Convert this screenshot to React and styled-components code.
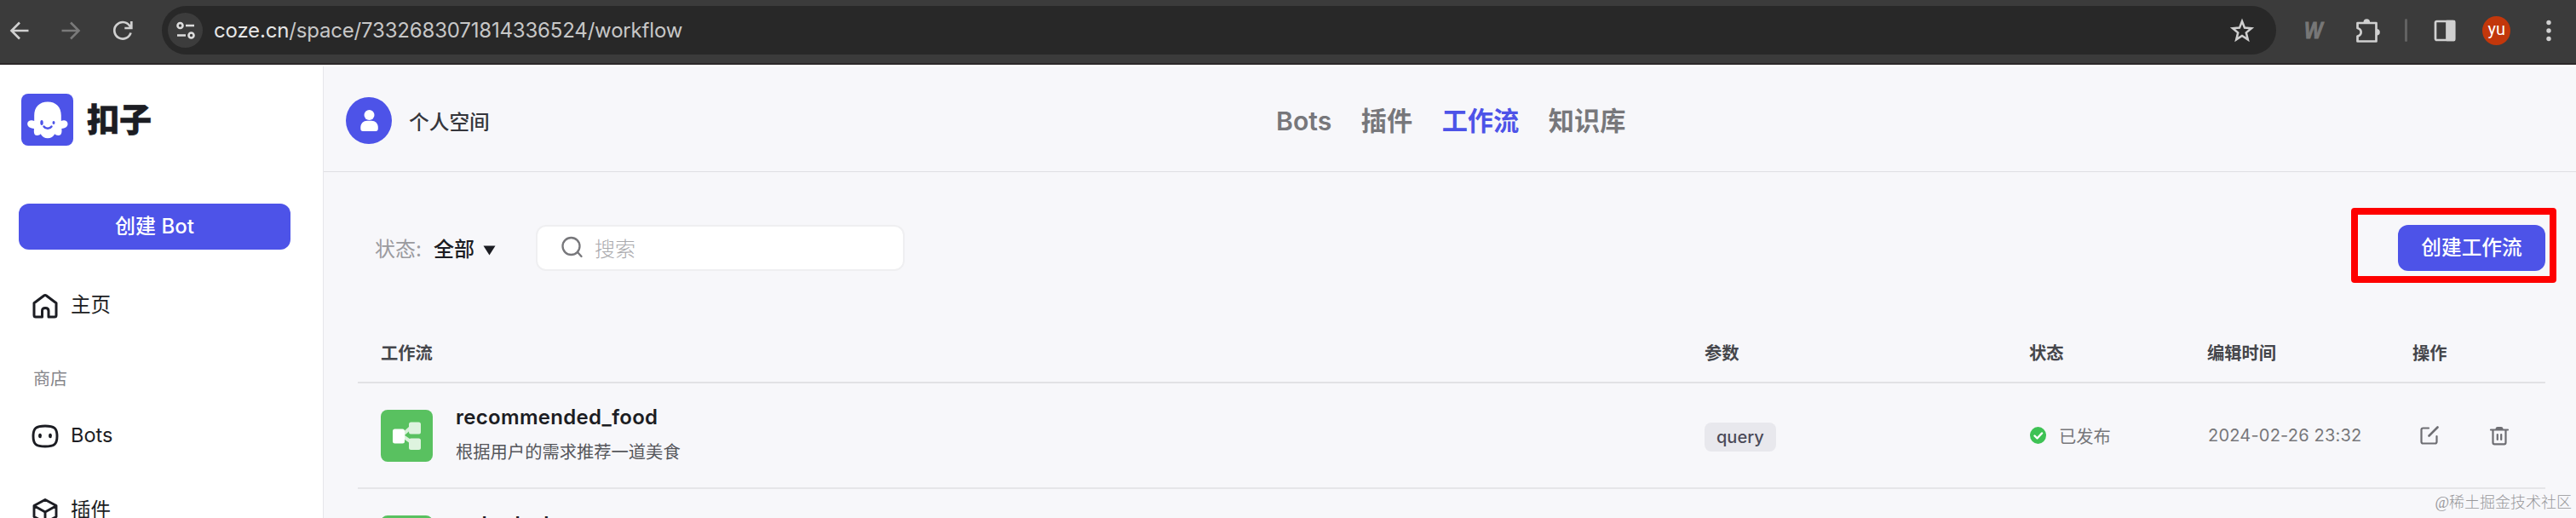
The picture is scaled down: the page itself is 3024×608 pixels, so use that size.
import React from "react";
import styled, { createGlobalStyle } from "styled-components";

const Global = createGlobalStyle`
  * { box-sizing: border-box; }
  body {
    margin: 0; background: #f7f7fa; overflow: hidden;
    font-family: Inter, "Noto Sans CJK SC", sans-serif; color: #1c1d23;
  }
`;

const Page = styled.div`
  width: 3024px; height: 608px; overflow: hidden;
  display: flex; flex-direction: column; position: relative;
`;
const BrowserBar = styled.header`
  height: 76px; flex: none; background: #3b3b3b; border-bottom: 2px solid #2c2829;
  display: flex; align-items: center; padding: 0 17px 3px 8px;
`;
const BarButton = styled.span`
  width: 30px; height: 30px; flex: none; display: flex; align-items: center; justify-content: center;
  margin-right: ${p => p.$after || 0}px;
  color: ${p => (p.$dim ? "#7a7a7a" : "#d0d0d0")};
  svg { display: block; }
`;
const AddressBar = styled.div`
  width: 2482px; height: 57px; flex: none; border-radius: 29px; background: #282828;
  display: flex; align-items: center; padding: 0 25px 0 7px;
`;
const SiteInfo = styled.span`
  width: 41px; height: 41px; border-radius: 50%; background: #3c3c3c;
  display: flex; align-items: center; justify-content: center;
`;
const Url = styled.span`
  margin-left: 13px; flex: 1; font-size: 24px; line-height: 30px; color: #c7c7c7; white-space: nowrap;
  letter-spacing: -.18px;
  b { font-weight: 400; color: #e6e6e6; }
`;
const Extension = styled.span`
  width: 26px; margin: 0 36px 0 31px; font: italic 900 27px/30px "Liberation Sans", sans-serif;
  color: #777; -webkit-text-stroke: 1px #777; transform: scaleX(.85);
`;
const Divider = styled.span`width: 3px; height: 27px; border-radius: 2px; background: #626262; margin: 0 29px 0 29px;`;
const Profile = styled.span`
  width: 34px; height: 34px; border-radius: 50%; background: #c2370b; color: #fff;
  font: 20px/30px Roboto, sans-serif; text-align: center; margin: 0 30px 0 29px;
`;

const Body = styled.div`flex: 1; min-height: 0; display: flex; border-top: 2px solid #fff;`;
const Sidebar = styled.aside`
  width: 380px; flex: none; background: #fff; border-right: 1px solid #e6e6ea;
  padding: 32px 38px 0 22px; display: flex; flex-direction: column;
`;
const Brand = styled.div`
  height: 61px; display: flex; align-items: center; gap: 16px; padding-left: 3px; margin-bottom: 68px;
`;
const BrandName = styled.span`font-size: 38px; line-height: 58px; padding-bottom: 2px; font-weight: 900; -webkit-text-stroke: .6px #1c1d23;`;
const PrimaryButton = styled.button`
  border: 0; height: 54px; width: ${p => p.$w}px; flex: none; border-radius: 12px; background: #4d53e8; color: #fff;
  font: 500 ${p => p.$size || 24}px/30px Inter, "Noto Sans CJK SC", sans-serif; padding: 0 0 1px;
`;
const MenuItem = styled.a`
  height: 56px; flex: none; display: flex; align-items: center; gap: 14px; padding-left: 15px;
  margin-top: ${p => p.$top}px; font-size: 23.5px; line-height: 54px; color: #1c1d23;
  svg { flex: none; }
`;
const MenuText = styled.span`padding-bottom: 2px; line-height: 28px;`;
const MenuLabel = styled.div`
  height: 30px; flex: none; margin-top: 43px; margin-bottom: 1px; padding-left: 17px; font-size: 20px; line-height: 30px; color: #85858a;
`;

const Main = styled.main`flex: 1; min-width: 0; display: flex; flex-direction: column;`;
const TopBar = styled.div`
  height: 124px; flex: none; border-bottom: 1px solid #dfdfe3;
  display: grid; grid-template-columns: 1120px 1fr; align-items: center; padding: 4px 0 0 26px;
`;
const Space = styled.div`display: flex; align-items: center; gap: 20px; font-size: 23.7px; font-weight: 500; color: #35363c;`;
const Tabs = styled.nav`display: flex; gap: 34.5px; margin-left: -28px;`;
const Tab = styled.a`
  font-size: 30.2px; line-height: 40px; font-weight: 600;
  color: ${p => (p.$active ? "#4d53e8" : "#77777b")};
`;
const Toolbar = styled.div`
  height: 54px; flex: none; margin: 62px 36px 0 60px; display: flex; align-items: center; font-size: 24px;
`;
const FilterLabel = styled.span`color: #9b9b9f; width: 69px; white-space: nowrap; padding-bottom: 2px;`;
const FilterValue = styled.span`
  font-weight: 500; width: 120px; display: flex; align-items: center; gap: 10px; color: #1c1d23; padding-bottom: 2px;
  svg { margin-top: 7px; }
`;
const Search = styled.label`
  width: 433px; height: 54px; border: 2px solid #efeff1; border-radius: 12px; background: #fff;
  display: flex; align-items: center; gap: 14px; padding: 0 0 2px 28px; color: #aaaaad; font-weight: 300; margin-right: auto;
`;
const Highlight = styled.div`
  position: absolute; left: 2760px; top: 244px; width: 241px; height: 88px;
  border: 8px solid #fe0000; border-radius: 4px;
`;

const Table = styled.section`margin: 50px 36px 0 40px; display: flex; flex-direction: column;`;
const columns = "1554px 381px 209px 241px 1fr";
const HeadRow = styled.div`
  display: grid; grid-template-columns: ${columns}; height: 82px; padding: 9px 0 0 27px; align-items: center;
  border-bottom: 2px solid #e2e2e5; font-size: 20.3px; font-weight: 600; color: #45464b;
`;
const Row = styled.div`
  display: grid; grid-template-columns: ${columns}; height: 124px; flex: none; padding-left: 27px; align-items: center;
  border-bottom: 2px solid #e6e6e9; font-size: 20.3px; color: #77777b;
`;
const NameCell = styled.div`display: flex; align-items: center; gap: 27px;`;
const NameText = styled.div`display: flex; flex-direction: column; padding-top: 1px;`;
const Name = styled.span`font-size: 24px; line-height: 38px; font-weight: 600; color: #1c1d23; letter-spacing: .3px;`;
const Description = styled.span`font-size: 20.3px; line-height: 44px; height: 44px; color: #55565b;`;
const Param = styled.span`
  display: inline-block; height: 34px; padding: 0 14px; border-radius: 8px; background: #e8e8ed; color: #4b4a58;
  font-size: 20px; line-height: 34px; font-weight: 500; margin-top: 3px;
`;
const Status = styled.span`display: flex; align-items: center; gap: 15px; padding: 0 0 1px 1px;`;
const Time = styled.span`font-size: 20px; letter-spacing: .2px; padding-left: 1px;`;
const Actions = styled.span`display: flex; gap: 58px; padding-left: 8px;`;
const Watermark = styled.div`
  position: absolute; right: 5px; top: 577px; font: 300 18px/26px "Liberation Serif", "Noto Sans CJK SC", serif;
  color: #97979a; white-space: nowrap;
`;

const stroke = { fill: "none", stroke: "currentColor", strokeLinecap: "round", strokeLinejoin: "round" };

const Arrow = ({ flip }) => (
  <svg width="24" height="24" viewBox="0 0 24 24" {...stroke} strokeLinecap="butt" strokeLinejoin="miter" strokeWidth="2.6">
    <path d={flip ? "M1.5 12H21M12 2.5l9.5 9.5-9.5 9.5" : "M22.5 12H3M12 2.5 2.5 12l9.5 9.5"} />
  </svg>
);
const Reload = () => (
  <svg width="26" height="26" viewBox="0 0 26 26" {...stroke} strokeLinecap="butt" strokeWidth="2.7">
    <path d="M22.5 15.500a9.800 9.800 0 1 1-1.500-8.500l2 2.500M23.300 2v8h-8" strokeLinejoin="miter" />
  </svg>
);
const Tune = () => (
  <svg width="22" height="22" viewBox="0 0 22 22" {...stroke} stroke="#ddd" strokeWidth="2.6" strokeLinecap="butt">
    <circle cx="4.500" cy="5" r="3" /><path d="M11 5h10M1 16.500h10" /><circle cx="17.500" cy="16.500" r="3" />
  </svg>
);
const Star = () => (
  <svg width="30" height="30" viewBox="0 0 30 30" {...stroke} stroke="#cfcfcf" strokeWidth="2.5" strokeLinejoin="miter">
    <path d="M15 4l3 7.600 8 .600-6.200 5.200 2 8L15 21l-6.800 4.400 2-8L4 12.200l8-.6z" />
  </svg>
);
const Puzzle = () => (
  <svg width="30" height="30" viewBox="0 0 30 30" {...stroke} strokeWidth="2.7">
    <path d="M3.500 6h22v21.500h-22v-6c5.500-1.500 5.500-8 0-9.500z" />
    <path d="M10.500 5a3.800 3.800 0 0 1 7.600 0zM26 13a3.800 3.800 0 0 1 0 7.600z" fill="currentColor" stroke="none" />
  </svg>
);
const Panel = () => (
  <svg width="26" height="26" viewBox="0 0 26 26" {...stroke} strokeWidth="2.7">
    <rect x="2" y="2" width="22" height="22" rx="1.500" /><path d="M15.500 2H24v22h-8.500z" fill="currentColor" />
  </svg>
);
const Dots = () => (
  <svg width="8" height="26" viewBox="0 0 8 26" fill="#d0d0d0">
    <circle cx="4" cy="3.500" r="2.700" /><circle cx="4" cy="13" r="2.700" /><circle cx="4" cy="22.500" r="2.700" />
  </svg>
);
const Logo = () => (
  <svg width="61" height="61" viewBox="0 0 61 61">
    <rect width="61" height="61" rx="8" fill="#4d53e8" />
    <path d="M15.200 25.500C15.200 15.500 21.500 9.500 31 9.500s15.800 6 15.800 16V32c3-1.500 7.700-.5 7.700 3.500 0 3.500-3.500 5.200-7.200 5.500.7 4.500-.3 8-3.800 8-2 0-3.200-.7-4.200-1.700-1.500 3-4.800 5-8.300 5s-6.800-2-8.300-5c-1 1-2.200 1.700-4.200 1.700-3.500 0-4-3.500-3.500-8-3.700-.3-7.800-2-7.800-5.500 0-4 5-5 8-3.500z" fill="#fff" />
    <ellipse cx="24" cy="34" rx="1.700" ry="3" fill="#4d53e8" /><ellipse cx="38" cy="34" rx="1.500" ry="2" fill="#4d53e8" />
    <path d="M26.500 38.500c2 3 7 3 9 0" {...stroke} stroke="#4d53e8" strokeWidth="2.400" />
  </svg>
);
const Avatar = () => (
  <svg width="54" height="55" viewBox="0 0 54 55">
    <ellipse cx="27" cy="27.500" rx="27" ry="27.500" fill="#4d53e8" />
    <circle cx="27.500" cy="21" r="6" fill="#fff" />
    <path d="M17.300 37v-1.500c0-5 3.500-7.800 7.500-7.800h5.500c4 0 7.500 2.800 7.500 7.800V37c0 2-1 3-2.800 3H20c-1.800 0-2.700-1-2.700-3z" fill="#fff" />
  </svg>
);
const Home = () => (
  <svg width="32" height="32" viewBox="0 0 32 32" {...stroke} strokeWidth="3">
    <path d="M3 12.800 14.600 4q1.400-1 2.800 0L29 12.800V27q0 2-2 2h-7v-7q0-3.500-3.800-3.500T12.500 22v7H5q-2 0-2-2z" />
  </svg>
);
const BotIcon = () => (
  <svg width="32" height="32" viewBox="0 0 32 32" {...stroke} strokeWidth="2.900">
    <path d="M16 4C26.500 4 30 6.500 30 16s-3.500 12-14 12S2 25.500 2 16 5.500 4 16 4z" />
    <ellipse cx="10" cy="15.500" rx="1.900" ry="2.800" fill="currentColor" stroke="none" />
    <ellipse cx="22" cy="15.500" rx="1.900" ry="2.800" fill="currentColor" stroke="none" />
  </svg>
);
const Cube = () => (
  <svg width="32" height="32" viewBox="0 0 32 32" {...stroke} strokeWidth="2.900">
    <path d="M16 2.500 29 9.500v13L16 29.500 3 22.500v-13zM3.500 10 16 17l12.500-7M16 17v12" />
  </svg>
);
const SearchIcon = () => (
  <svg width="25" height="26" viewBox="0 0 25 26" {...stroke} stroke="#77777b" strokeWidth="2.300">
    <circle cx="11.500" cy="12" r="10" /><path d="m19 19 4.500 5" />
  </svg>
);
const FlowIcon = () => (
  <svg width="61" height="61" viewBox="0 0 61 61">
    <rect width="61" height="61" rx="8" fill="#59c160" />
    <path d="M26 29 36 20M26 31l10 7" stroke="#d9f2da" strokeWidth="4" />
    <rect x="33" y="14.500" width="14" height="14" rx="2.500" fill="#def3df" />
    <rect x="33" y="33.500" width="14" height="13.500" rx="2.500" fill="#def3df" />
    <rect x="14" y="22.500" width="14" height="17" rx="2.500" fill="#fff" />
  </svg>
);
const Check = () => (
  <svg width="19" height="20" viewBox="0 0 19 20">
    <ellipse cx="9.500" cy="10" rx="9.500" ry="10" fill="#3ec254" />
    <path d="m5.500 10.500 3 3 5.500-6" {...stroke} stroke="#fff" strokeWidth="2.400" />
  </svg>
);
const Edit = () => (
  <svg width="24" height="24" viewBox="0 0 24 24" {...stroke} stroke="#6e6e73" strokeWidth="2.200">
    <path d="M11 3.500H4.500Q2.500 3.500 2.500 5.500v14q0 2 2 2h14q2 0 2-2v-6.500" /><path d="M11.500 12.500 21.500 2.500" strokeWidth="2.600" />
  </svg>
);
const Trash = () => (
  <svg width="24" height="24" viewBox="0 0 24 24" {...stroke} stroke="#6e6e73" strokeWidth="2.200">
    <path d="M2 5.500h20M4.500 6v14.500q0 1.800 1.800 1.800h11.400q1.800 0 1.800-1.800V6M9.800 11v6M14.200 11v6" />
    <path d="M7.500 5q0-3 2.500-3h4q2.500 0 2.500 3z" fill="#6e6e73" stroke="none" />
  </svg>
);
const Caret = () => <svg width="15" height="12" viewBox="0 0 15 12"><path d="M.5.500h14L7.500 11.500z" fill="#1c1d23" /></svg>;

const WorkflowRow = ({ name, description, param, status, time }) => (
  <Row>
    <NameCell><FlowIcon /><NameText><Name>{name}</Name><Description>{description}</Description></NameText></NameCell>
    <span>{param && <Param>{param}</Param>}</span>
    <span>{status && <Status><Check />{status}</Status>}</span>
    <Time>{time}</Time>
    <Actions><Edit /><Trash /></Actions>
  </Row>
);

export default function App() {
  return (
    <Page>
      <Global />
      <BrowserBar>
        <BarButton $after={30}><Arrow /></BarButton>
        <BarButton $dim $after={31}><Arrow flip /></BarButton>
        <BarButton $after={31}><Reload /></BarButton>
        <AddressBar>
          <SiteInfo><Tune /></SiteInfo>
          <Url><b>coze.cn</b>/space/7332683071814336524/workflow</Url>
          <Star />
        </AddressBar>
        <Extension>W</Extension>
        <BarButton><Puzzle /></BarButton>
        <Divider />
        <BarButton><Panel /></BarButton>
        <Profile>yu</Profile>
        <BarButton><Dots /></BarButton>
      </BrowserBar>
      <Body>
        <Sidebar>
          <Brand><Logo /><BrandName>扣子</BrandName></Brand>
          <PrimaryButton $w={319}>创建 Bot</PrimaryButton>
          <MenuItem $top={38}><Home /><MenuText>主页</MenuText></MenuItem>
          <MenuLabel>商店</MenuLabel>
          <MenuItem $top={23}><BotIcon /><MenuText>Bots</MenuText></MenuItem>
          <MenuItem $top={32}><Cube /><MenuText>插件</MenuText></MenuItem>
        </Sidebar>
        <Main>
          <TopBar>
            <Space><Avatar />个人空间</Space>
            <Tabs><Tab>Bots</Tab><Tab>插件</Tab><Tab $active>工作流</Tab><Tab>知识库</Tab></Tabs>
          </TopBar>
          <Toolbar>
            <FilterLabel>状态:</FilterLabel>
            <FilterValue>全部<Caret /></FilterValue>
            <Search><SearchIcon />搜索</Search>
            <PrimaryButton $w={173} $size={23.7}>创建工作流</PrimaryButton>
          </Toolbar>
          <Table>
            <HeadRow><span>工作流</span><span>参数</span><span>状态</span><span>编辑时间</span><span>操作</span></HeadRow>
            <WorkflowRow name="recommended_food" description="根据用户的需求推荐一道美食" param="query" status="已发布" time="2024-02-26 23:32" />
            <WorkflowRow name="output_stream" />
          </Table>
        </Main>
      </Body>
      <Highlight />
      <Watermark>@稀土掘金技术社区</Watermark>
    </Page>
  );
}
